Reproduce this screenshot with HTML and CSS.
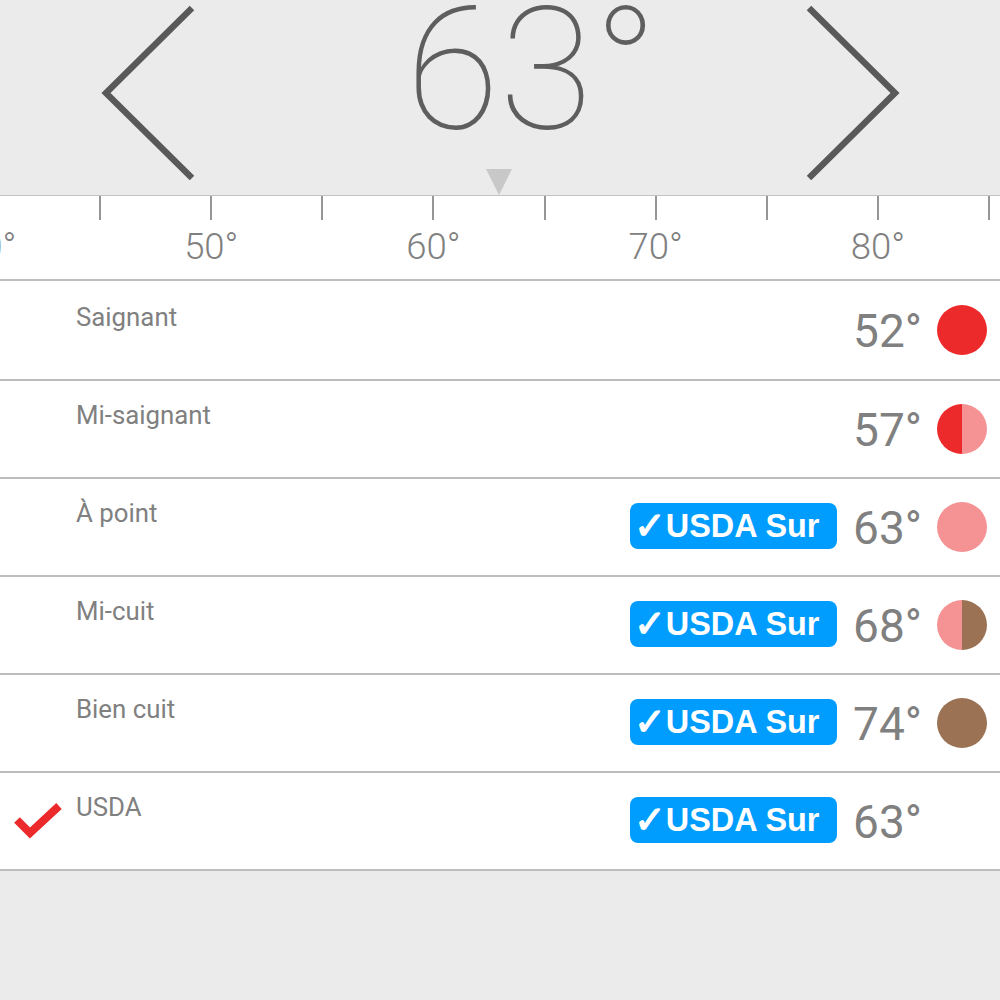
FILE: index.html
```html
<!DOCTYPE html>
<html lang="fr">
<head>
    <meta charset="UTF-8">
    <meta name="viewport" content="width=device-width, initial-scale=1.0">
    <title>Cuisson</title>
    <link rel="stylesheet" href="styles.css">
</head>
<body>
    <div class="dial">
        <svg class="arrow" width="100" height="180" viewBox="0 0 100 180"><path d="M92 8 L6 93 L92 178" /></svg>
        <div class="dial-temp">63°</div>
        <svg class="arrow" width="100" height="180" viewBox="0 0 100 180"><path d="M9 8 L95 93 L9 178" /></svg>
        <div class="pointer"></div>
    </div>

    <div class="ruler">
        <div class="mark"><span class="tick"></span><span class="mark-label">40°</span></div>
        <div class="mark"><span class="tick"></span></div>
        <div class="mark"><span class="tick"></span><span class="mark-label">50°</span></div>
        <div class="mark"><span class="tick"></span></div>
        <div class="mark"><span class="tick"></span><span class="mark-label">60°</span></div>
        <div class="mark"><span class="tick"></span></div>
        <div class="mark"><span class="tick"></span><span class="mark-label">70°</span></div>
        <div class="mark"><span class="tick"></span></div>
        <div class="mark"><span class="tick"></span><span class="mark-label">80°</span></div>
        <div class="mark"><span class="tick"></span></div>
    </div>

    <div class="list">
        <div class="row row-first">
            <div class="row-check"></div>
            <div class="row-name">Saignant</div>
            <div class="row-temp">52°</div>
            <div class="dot dot-rare"></div>
        </div>
        <div class="row">
            <div class="row-check"></div>
            <div class="row-name">Mi-saignant</div>
            <div class="row-temp">57°</div>
            <div class="dot dot-medrare"></div>
        </div>
        <div class="row">
            <div class="row-check"></div>
            <div class="row-name">À point</div>
            <div class="badge"><span class="badge-mark">✓</span>USDA Sur</div>
            <div class="row-temp">63°</div>
            <div class="dot dot-medium"></div>
        </div>
        <div class="row">
            <div class="row-check"></div>
            <div class="row-name">Mi-cuit</div>
            <div class="badge"><span class="badge-mark">✓</span>USDA Sur</div>
            <div class="row-temp">68°</div>
            <div class="dot dot-medwell"></div>
        </div>
        <div class="row">
            <div class="row-check"></div>
            <div class="row-name">Bien cuit</div>
            <div class="badge"><span class="badge-mark">✓</span>USDA Sur</div>
            <div class="row-temp">74°</div>
            <div class="dot dot-well"></div>
        </div>
        <div class="row">
            <div class="row-check">
                <svg width="48" height="40" viewBox="0 0 48 40"><path d="M3 19 L16 32 L45 5" /></svg>
            </div>
            <div class="row-name">USDA</div>
            <div class="badge"><span class="badge-mark">✓</span>USDA Sur</div>
            <div class="row-temp">63°</div>
            <div class="dot"></div>
        </div>
    </div>
</body>
</html>
```

FILE: styles.css
```css
html, body {
    margin: 0;
    padding: 0;
}
body {
    width: 1000px;
    height: 1000px;
    overflow: hidden;
    background-color: #ebebeb;
    font-family: Roboto, sans-serif;
}
.dial {
    position: relative;
    display: flex;
    justify-content: space-between;
    height: 195px;
    padding: 0 100px;
    box-sizing: border-box;
}
.arrow {
    display: block;
    flex-shrink: 0;
}
.arrow path {
    fill: none;
    stroke: #595959;
    stroke-width: 6.4;
}
.dial-temp {
    margin-left: 64px;
    font-size: 171px;
    font-weight: 100;
    line-height: 140px;
    color: #5e5e5e;
}
.pointer {
    position: absolute;
    left: 486px;
    top: 169px;
    width: 0;
    height: 0;
    border-left: 13px solid transparent;
    border-right: 13px solid transparent;
    border-top: 26px solid #c8c8c8;
}
.ruler {
    display: flex;
    height: 83px;
    border-top: 1px solid #c4c4c4;
    background-color: #fff;
    overflow: hidden;
}
.mark {
    flex: 0 0 111.11px;
    display: flex;
    flex-direction: column;
    align-items: center;
}
.mark:first-child {
    margin-left: -66.5px;
}
.tick {
    width: 2px;
    height: 24px;
    background-color: #969696;
}
.mark-label {
    margin-top: 6px;
    font-size: 36.5px;
    font-weight: 300;
    line-height: 41px;
    color: #808080;
}
.list {
    background-color: #fff;
    border-bottom: 2px solid #bdbdbd;
}
.row {
    display: flex;
    align-items: center;
    height: 96px;
    padding-right: 13px;
    border-top: 2px solid #bdbdbd;
}
.row-first {
    height: 98px;
}
.row-check {
    flex: 0 0 76px;
    padding-left: 14px;
    box-sizing: border-box;
}
.row-check svg {
    display: block;
}
.row-check path {
    fill: none;
    stroke: #ec292b;
    stroke-width: 8;
}
.row-name {
    flex: 1;
    align-self: flex-start;
    margin-top: 19px;
    font-size: 25.8px;
    line-height: 30px;
    color: #808080;
}
.row-first .row-name {
    margin-top: 21px;
}
.badge {
    display: flex;
    width: 207px;
    height: 46px;
    margin-top: -2px;
    box-sizing: border-box;
    padding-left: 4px;
    border-radius: 8px;
    background-color: #009dff;
    font-family: "Liberation Sans", sans-serif;
    font-size: 32.4px;
    font-weight: 700;
    line-height: 46px;
    color: #fff;
    white-space: nowrap;
}
.badge-mark {
    flex: 0 0 29px;
    font-family: "DejaVu Sans", sans-serif;
    font-size: 38px;
    -webkit-text-stroke: 1.2px #fff;
}
.row-temp {
    width: 85px;
    margin-top: 2px;
    font-size: 46px;
    font-weight: 400;
    line-height: 56px;
    text-align: right;
    color: #808080;
}
.dot {
    width: 50px;
    height: 50px;
    margin-left: 15px;
    border-radius: 50%;
}
.dot-rare {
    background-color: #ec292b;
}
.dot-medrare {
    background: linear-gradient(to right, #ec292b 50%, #f49294 50%);
}
.dot-medium {
    background-color: #f49294;
}
.dot-medwell {
    background: linear-gradient(to right, #f49294 50%, #9b7253 50%);
}
.dot-well {
    background-color: #9b7253;
}
```
